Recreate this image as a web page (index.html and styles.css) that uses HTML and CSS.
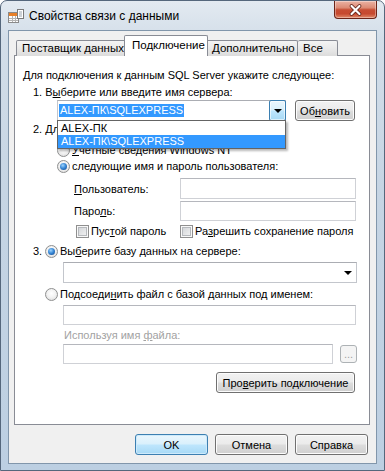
FILE: index.html
```html
<!DOCTYPE html>
<html lang="ru">
<head>
<meta charset="utf-8">
<title>Свойства связи с данными</title>
<link rel="stylesheet" href="styles.css">
</head>
<body>
<div class="window">
  <div class="titlebar">
    <svg class="app-icon" width="16" height="16" viewBox="0 0 16 16">
      <rect x="0.5" y="4.5" width="10" height="10" fill="#fff" stroke="#8a8a8a"/>
      <rect x="1" y="5" width="9" height="3" fill="#e8812a"/>
      <path d="M1 10.5h9M1 12.5h9M4.5 8v6M7.5 8v6" stroke="#b5b5b5"/>
      <rect x="9.5" y="1.5" width="6" height="9" fill="#fff" stroke="#7a7a7a"/>
      <path d="M11 4h3M11 6h3M11 8h3" stroke="#9aa4ad"/>
    </svg>
    <span class="title">Свойства связи с данными</span>
    <div class="close">
      <svg width="41" height="16" viewBox="0 0 41 16">
        <path d="M16.5 4 L24.5 12 M24.5 4 L16.5 12" stroke="#5a1c12" stroke-width="3.8" stroke-linecap="round"/>
        <path d="M16.5 4 L24.5 12 M24.5 4 L16.5 12" stroke="#ffffff" stroke-width="2.2" stroke-linecap="round"/>
      </svg>
    </div>
  </div>
  <div class="client">
    <div class="tabs">
      <div class="tab t1">Поставщик данных</div>
      <div class="tab t2 active">Подключение</div>
      <div class="tab t3">Дополнительно</div>
      <div class="tab t4">Все</div>
    </div>
    <div class="panel">
      <div class="row r-intro"><span>Для подключения к данным SQL Server укажите следующее:</span></div>
      <div class="row r-step"><span>1. В<u>ы</u>берите или введите имя сервера:</span></div>
      <div class="row r-server">
        <div class="combo server-combo">
          <span class="combo-text"><span class="sel">ALEX-ПК\SQLEXPRESS</span></span>
          <span class="combo-btn hot"><i class="arrow"></i></span>
        </div>
        <button class="btn refresh">Об<u>н</u>овить</button>
        <div class="dropdown">
          <div class="item">ALEX-ПК</div>
          <div class="item selected">ALEX-ПК\SQLEXPRESS</div>
        </div>
      </div>
      <div class="row r-step2"><span>2. Для входа на сервер использовать:</span></div>
      <div class="row r-radio-nt"><span class="radio"></span><span class="rlabel"><u>У</u>четные сведения Windows NT</span></div>
      <div class="row r-radio-user"><span class="radio checked"></span><span class="rlabel">сле<u>д</u>ующие имя и пароль пользователя:</span></div>
      <div class="row r-field r-user"><span class="flabel"><u>П</u>ользователь:</span><span class="textbox"></span></div>
      <div class="row r-field r-pass"><span class="flabel">Паро<u>л</u>ь:</span><span class="textbox"></span></div>
      <div class="row r-checks">
        <span class="check-item c1"><span class="checkbox"></span><span>Пус<u>т</u>ой пароль</span></span>
        <span class="check-item c2"><span class="checkbox"></span><span>Ра<u>з</u>решить сохранение пароля</span></span>
      </div>
      <div class="row r-step3"><span class="num">3.</span><span class="radio checked"></span><span class="rlabel">Вы<u>б</u>ерите базу данных на сервере:</span></div>
      <div class="row r-dbcombo">
        <div class="combo db-combo"><span class="combo-text"></span><span class="combo-plain"><i class="arrow"></i></span></div>
      </div>
      <div class="row r-attach"><span class="radio"></span><span class="rlabel">Подсоеди<u>н</u>ить файл с базой данных под именем:</span></div>
      <div class="row r-attachbox"><span class="textbox wide"></span></div>
      <div class="row r-fname disabled"><span>Используя имя <u>ф</u>айла:</span></div>
      <div class="row r-fnamebox"><span class="textbox fname"></span><button class="btn dots disabled">...</button></div>
      <div class="row r-test"><button class="btn test">Про<u>в</u>ерить подключение</button></div>
    </div>
    <div class="buttons">
      <button class="btn dlg default">OK</button>
      <button class="btn dlg">Отмена</button>
      <button class="btn dlg">Справка</button>
    </div>
  </div>
</div>
</body>
</html>
```
FILE: styles.css
```css
* { box-sizing: border-box; }
html, body { margin: 0; padding: 0; }
body {
  width: 385px;
  height: 471px;
  overflow: hidden;
  font-family: "Liberation Sans", Arial, sans-serif;
  font-size: 11px;
  color: #000;
  background: #ffffff;
}
u { text-decoration: underline; text-underline-offset: 1px; }

.window {
  width: 385px;
  height: 471px;
  display: flex;
  flex-direction: column;
  border: 1px solid #55677c;
  border-radius: 7px 7px 0 0;
  background: linear-gradient(180deg, #e3eaf1 0%, #d3dee9 8%, #c6d5e4 40%, #bccfe2 100%);
}

.titlebar {
  height: 29px;
  flex: none;
  display: flex;
  align-items: center;
  padding-left: 7px;
}
.app-icon { flex: none; }
.title {
  margin-left: 5px;
  font-size: 12px;
  color: #000;
  flex: 1;
}
.close {
  align-self: flex-start;
  width: 43px;
  height: 18px;
  margin-right: 7px;
  border: 1px solid #6b2418;
  border-top: none;
  border-radius: 0 0 4px 4px;
  background: linear-gradient(180deg, #ebb3a4 0%, #dc8a74 40%, #c74d33 52%, #c6492f 75%, #e08a6a 100%);
  box-shadow: inset 0 0 0 1px rgba(255,255,255,0.35);
  display: flex;
  align-items: center;
  justify-content: center;
}

.client {
  flex: 1;
  margin: 0 7px 6px 7px;
  border: 1px solid #8196ab;
  background: #f0f0f0;
  padding: 4px 6px 0 5px;
  display: flex;
  flex-direction: column;
}

.tabs {
  display: flex;
  align-items: flex-end;
  height: 21px;
  padding-left: 2px;
  position: relative;
  z-index: 2;
}
.tab {
  height: 16px;
  border: 1px solid #898c95;
  border-bottom: none;
  background: linear-gradient(180deg, #f4f4f4 0%, #e9e9e9 50%, #dcdcdc 100%);
  line-height: 15px;
  padding-left: 5px;
  white-space: nowrap;
  border-radius: 2px 2px 0 0;
  font-size: 11.5px;
}
.t1 { width: 110px; }
.t2 { width: 84px; margin: 0 -2px; }
.t3 { width: 92px; padding-left: 6px; border-left: none; }
.t4 { width: 40px; border-left: none; }
.tab.active {
  height: 21px;
  background: #ffffff;
  position: relative;
  z-index: 3;
  line-height: 19px;
  padding-left: 7px;
}

.panel {
  height: 370px;
  flex: none;
  margin-top: -1px;
  border: 1px solid #898c95;
  background: #ffffff;
  display: flex;
  flex-direction: column;
  position: relative;
  z-index: 1;
}

.row {
  display: flex;
  align-items: center;
  height: 16px;
  white-space: nowrap;
  flex: none;
}
.r-intro { margin-top: 11px; padding-left: 8px; }
.r-step { margin-top: 1px; padding-left: 18px; }
.r-server { height: 21px; padding-left: 42px; position: relative; align-items: stretch; }
.r-step2 { padding-left: 18px; }
.r-radio-nt { margin-top: 5px; padding-left: 42px; }
.r-radio-user { padding-left: 42px; }
.r-field { height: 21px; padding-left: 59px; margin-top: 4px; }
.r-pass { height: 20px; margin-top: 2px; }
.r-checks { margin-top: 2px; padding-left: 61px; }
.r-step3 { margin-top: 4px; padding-left: 18px; }
.r-dbcombo { height: 21px; margin-top: 3px; padding-left: 48px; }
.r-attach { margin-top: 3px; padding-left: 30px; }
.r-attachbox { height: 20px; margin-top: 3px; padding-left: 48px; }
.r-fname { height: 15px; margin-top: 2px; padding-left: 49px; }
.r-fnamebox { height: 20px; margin-top: 2px; padding-left: 48px; }
.r-test { height: 21px; margin-top: 8px; justify-content: flex-end; padding-right: 14px; }

.disabled { color: #a2a2a2; }

.rlabel { margin-left: 2px; }
.num { width: 12px; }
.flabel { width: 106px; }

.radio {
  width: 13px;
  height: 13px;
  flex: none;
  border-radius: 50%;
  border: 1px solid #8e8f8f;
  background: radial-gradient(circle at 50% 40%, #ffffff 0%, #f3f3f3 45%, #d6d6d6 100%);
  position: relative;
}
.radio.checked::after {
  content: "";
  position: absolute;
  left: 2px;
  top: 2px;
  width: 7px;
  height: 7px;
  border-radius: 50%;
  background: radial-gradient(circle at 40% 35%, #9fd3fb 0%, #3a8ad8 45%, #0d3f84 100%);
}

.checkbox {
  width: 13px;
  height: 13px;
  flex: none;
  border: 1px solid #8f8f8f;
  background: linear-gradient(135deg, #cdd0d4 0%, #f6f6f6 100%);
  box-shadow: inset 0 0 0 1px #f8f8f8, inset 0 0 0 2px #b6b9bd;
  margin-right: 2px;
}
.check-item { display: flex; align-items: center; }
.c1 { width: 104px; }

.textbox {
  display: block;
  width: 176px;
  height: 100%;
  background: #ffffff;
  border: 1px solid #cfd1d6;
  border-top-color: #b5b7bd;
}
.textbox.wide { width: 293px; }
.textbox.fname { width: 270px; }

.combo {
  display: flex;
  height: 100%;
  background: #ffffff;
  border: 1px solid #c3c6cc;
  border-top-color: #abadb3;
}
.server-combo { width: 229px; }
.db-combo { width: 294px; }
.combo-text { flex: 1; display: flex; align-items: center; padding-left: 1px; }
.sel {
  background: #3399ff;
  color: #ffffff;
  height: 13px;
  line-height: 13px;
  padding: 0 1px;
}
.combo-btn {
  width: 17px;
  margin: -1px -1px -1px 0;
  display: flex;
  align-items: center;
  justify-content: center;
}
.combo-btn.hot {
  border: 1px solid #3c7fb1;
  border-radius: 2px;
  background: linear-gradient(180deg, #eaf6fd 0%, #d9f0fc 48%, #bee6fd 52%, #a7d9f5 100%);
  box-shadow: inset 0 0 0 1px rgba(255,255,255,0.6);
}
.combo-plain {
  width: 17px;
  display: flex;
  align-items: center;
  justify-content: center;
}
.arrow {
  display: block;
  width: 0;
  height: 0;
  border-left: 4px solid transparent;
  border-right: 4px solid transparent;
  border-top: 4px solid #000;
}

.btn {
  font: inherit;
  color: #000;
  height: 100%;
  padding: 0;
  border: 1px solid #707070;
  border-radius: 3px;
  background: linear-gradient(180deg, #f2f2f2 0%, #ebebeb 48%, #dddddd 52%, #cfcfcf 100%);
  box-shadow: inset 0 0 0 1px #fcfcfc;
  white-space: nowrap;
}
.refresh { width: 60px; margin-left: 9px; }
.test { width: 139px; }
.dots { width: 17px; height: 18px; margin-left: 7px; align-self: center; line-height: 10px; }
.btn.disabled {
  border-color: #adb2b5;
  background: #f4f4f4;
  box-shadow: none;
  color: #a0a0a0;
}
.btn.default {
  border-color: #3c7fb1;
  background: linear-gradient(180deg, #eaf6fd 0%, #d9f0fc 48%, #bee6fd 52%, #a7d9f5 100%);
  box-shadow: inset 0 0 0 1px #cdeafb;
}

.dropdown {
  position: absolute;
  left: 42px;
  top: 20px;
  width: 229px;
  height: 29px;
  background: #ffffff;
  border: 1px solid #646464;
  box-shadow: 2px 2px 2px rgba(0,0,0,0.28);
  padding-top: 1px;
  z-index: 5;
}
.item {
  height: 13px;
  line-height: 13px;
  padding-left: 3px;
}
.item.selected { background: #3399ff; color: #ffffff; }

.buttons {
  display: flex;
  justify-content: flex-end;
  gap: 7px;
  margin-top: 9px;
  margin-right: 2px;
  height: 21px;
}
.dlg { width: 73px; }
```
